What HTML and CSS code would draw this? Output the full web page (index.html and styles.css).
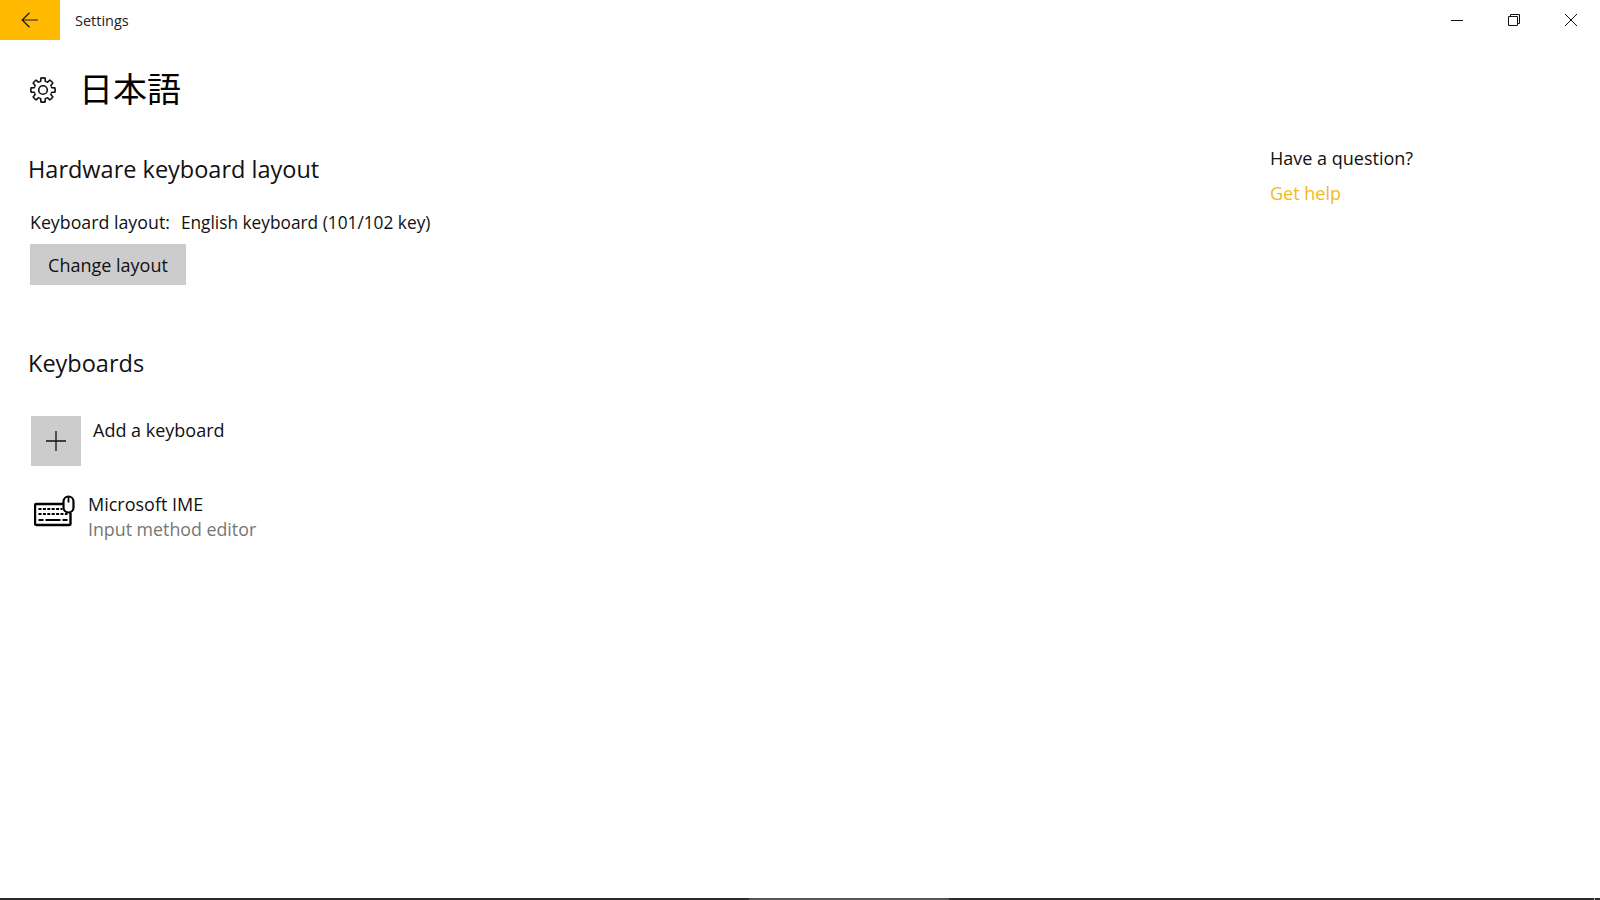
FILE: index.html
```html
<!DOCTYPE html>
<html lang="en">
<head>
    <meta charset="UTF-8">
    <title>Settings</title>
    <link rel="stylesheet" href="styles.css">
</head>
<body>
    <div class="window">
        <!-- Title bar -->
        <div class="titlebar">
            <button class="back-button" aria-label="Back">
                <svg width="18" height="16" viewBox="0 0 18 16"><path d="M8.500 .8 1.200 8l7.300 7.200M1.200 8H17" fill="none" stroke="#1a1a1a" stroke-width="1.200"/></svg>
            </button>
            <span class="app-title">Settings</span>
            <div class="window-controls">
                <span class="control">
                    <svg width="14" height="14" viewBox="0 0 14 14"><path d="M1 7.500h12" stroke="#111" stroke-width="1"/></svg>
                </span>
                <span class="control">
                    <svg width="14" height="14" viewBox="0 0 14 14"><path d="M1.500 3.500h9v9h-9zM3.500 3.500v-2h9v9h-2" fill="none" stroke="#111" stroke-width="1"/></svg>
                </span>
                <span class="control">
                    <svg width="14" height="14" viewBox="0 0 14 14"><path d="M1 1l12 12M13 1 1 13" stroke="#111" stroke-width="1"/></svg>
                </span>
            </div>
        </div>

        <div class="page-header">
            <svg class="gear" width="26" height="26" viewBox="0 0 26 26">
                <g fill="none" stroke="#111" stroke-width="1.600" stroke-linejoin="round">
                    <path id="tooth" d="M9.560 4.690 10.700 4.200 10.900 1.100Q13 .6 15.100 1.100L15.300 4.200 16.440 4.690"/>
                    <use href="#tooth" transform="rotate(45 13 13)"/>
                    <use href="#tooth" transform="rotate(90 13 13)"/>
                    <use href="#tooth" transform="rotate(135 13 13)"/>
                    <use href="#tooth" transform="rotate(180 13 13)"/>
                    <use href="#tooth" transform="rotate(225 13 13)"/>
                    <use href="#tooth" transform="rotate(270 13 13)"/>
                    <use href="#tooth" transform="rotate(315 13 13)"/>
                    <circle cx="13" cy="13" r="4.300"/>
                </g>
            </svg>
            <h1>日本語</h1>
        </div>

        <div class="main">
            <div class="content">
                <h2>Hardware keyboard layout</h2>
                <p class="layout-line"><span class="layout-label">Keyboard layout:</span>English keyboard (101/102 key)</p>
                <button class="change-button">Change layout</button>

                <h2 class="keyboards-title">Keyboards</h2>
                <div class="add-row">
                    <span class="add-tile">
                        <svg width="20" height="20" viewBox="0 0 20 20"><path d="M10 0v20M0 10h20" stroke="#111" stroke-width="1.300"/></svg>
                    </span>
                    <span class="add-text">Add a keyboard</span>
                </div>
                <div class="ime-row">
                    <svg class="ime-icon" width="41" height="32" viewBox="0 0 41 32">
                        <path d="M29 9H2.500A1.500 1.500 0 0 0 1 10.500v18A1.500 1.500 0 0 0 2.500 30H35a1.500 1.500 0 0 0 1.500-1.500V18" fill="none" stroke="#000" stroke-width="2.400"/>
                        <rect x="29.500" y="1.500" width="10" height="16" rx="5" fill="#fff" stroke="#000" stroke-width="2.200"/>
                        <path d="M34.500 2v5.500" stroke="#000" stroke-width="1.800"/>
                        <path d="M4.500 14h24" stroke="#000" stroke-width="2.200" stroke-dasharray="3 1.400"/>
                        <path d="M4.500 19h29" stroke="#000" stroke-width="2.200" stroke-dasharray="3 1.400"/>
                        <path d="M4.500 25h5M11.500 25h15M28.500 25h5" stroke="#000" stroke-width="2.200"/>
                    </svg>
                    <div class="ime-text">
                        <div>Microsoft IME</div>
                        <div class="ime-sub">Input method editor</div>
                    </div>
                </div>
            </div>

            <div class="help">
                <div>Have a question?</div>
                <a class="help-link" href="#">Get help</a>
            </div>
        </div>

        <div class="taskbar-line"><span class="taskbar-thumb"></span><span class="taskbar-tick"></span></div>
    </div>
</body>
</html>
```

FILE: styles.css
```css
/* General */
html, body {
    margin: 0;
    height: 100%;
}

body {
    font-family: "Open Sans", "Noto Sans CJK JP", sans-serif;
    background-color: #fff;
    color: #111;
    overflow: hidden;
}

.window {
    height: 900px;
    display: flex;
    flex-direction: column;
}

/* Title bar */
.titlebar {
    height: 40px;
    display: flex;
    align-items: center;
    flex-shrink: 0;
}

.back-button {
    width: 60px;
    height: 40px;
    border: none;
    padding: 0;
    background-color: #ffb900;
    display: flex;
    align-items: center;
    justify-content: center;
}

.app-title {
    margin-left: 15px;
    font-size: 14.500px;
    color: #222;
}

.window-controls {
    margin-left: auto;
    display: flex;
    padding-right: 1px;
}

.control {
    width: 57px;
    height: 40px;
    display: flex;
    align-items: center;
    justify-content: center;
}

/* Page header */
.page-header {
    display: flex;
    align-items: center;
    height: 50px;
    margin-top: 23px;
    padding-left: 30px;
    gap: 23px;
}

.gear {
    margin-top: 4px;
}

h1 {
    margin: 0;
    font-family: "Noto Sans CJK JP", sans-serif;
    font-size: 34px;
    font-weight: 400;
    line-height: 50px;
    color: #000;
}

/* Main area */
.main {
    flex: 1;
    display: flex;
    justify-content: space-between;
}

.content {
    padding-left: 28px;
}

h2 {
    margin: 0;
    padding-top: 40px;
    font-size: 23.500px;
    font-weight: 400;
    line-height: 32px;
    color: #111;
}

.layout-line {
    margin: 25px 0 0 2px;
    font-size: 17.300px;
    line-height: 24px;
}

.layout-label {
    margin-right: 11px;
    font-size: 17.800px;
}

.change-button {
    display: block;
    margin: 9px 0 0 2px;
    width: 156px;
    height: 41px;
    border: none;
    padding: 0;
    background-color: #ccc;
    font-family: inherit;
    font-size: 18px;
    color: #111;
}

.keyboards-title {
    margin-top: 22px;
}

.add-row {
    display: flex;
    margin: 37px 0 0 3px;
}

.add-tile {
    width: 50px;
    height: 50px;
    background-color: #ccc;
    display: flex;
    align-items: center;
    justify-content: center;
}

.add-text {
    margin-left: 12px;
    font-size: 18px;
    line-height: 28px;
}

.ime-row {
    display: flex;
    margin: 26px 0 0 6px;
}

.ime-icon {
    margin-top: 3px;
}

.ime-text {
    margin-left: 13px;
    font-size: 18px;
    line-height: 25px;
}

.ime-sub {
    color: #767676;
    font-size: 17.800px;
}

/* Help column */
.help {
    width: 330px;
    padding-top: 33px;
    font-size: 18px;
    line-height: 25px;
}

.help-link {
    display: block;
    margin-top: 10px;
    color: #f4b81e;
    text-decoration: none;
}

/* Bottom strip */
.taskbar-line {
    height: 2px;
    background-color: #2b2b2b;
    display: flex;
    flex-shrink: 0;
}

.taskbar-thumb {
    width: 200px;
    margin-left: 749px;
    background-color: #555;
}

.taskbar-tick {
    width: 1px;
    margin-left: auto;
    margin-right: 5px;
    background-color: #bbb;
}
```
